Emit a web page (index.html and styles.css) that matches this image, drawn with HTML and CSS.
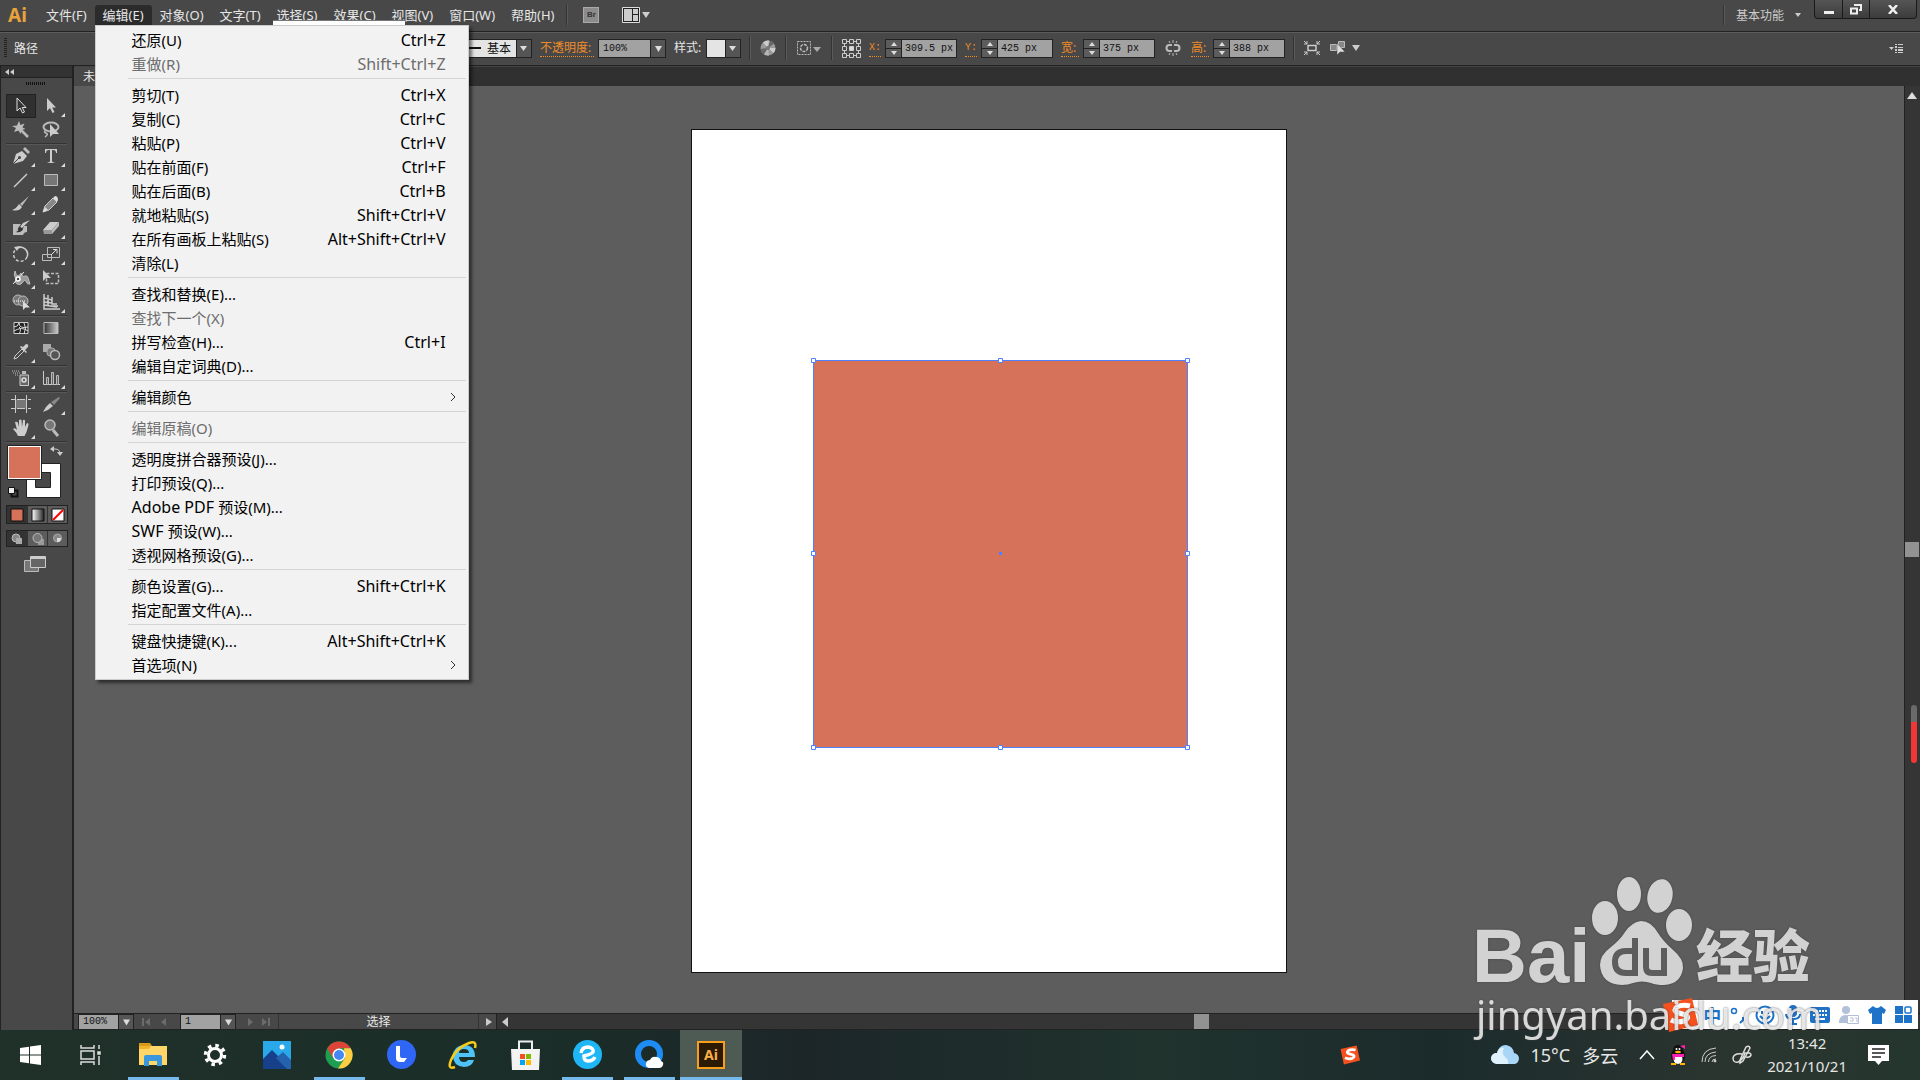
FILE: index.html
```html
<!DOCTYPE html>
<html lang="zh-CN">
<head>
<meta charset="utf-8">
<title>Illustrator</title>
<link rel="stylesheet" href="styles.css">
</head>
<body>
<header class="titlebar">
  <span class="brand">Ai</span>
  <nav class="menubar">
    <button>文件(F)</button>
    <div class="menu-host">
      <button class="open">编辑(E)</button>
      <div class="menu" role="menu">
        <section>
          <button>还原(U)<kbd>Ctrl+Z</kbd></button>
          <button disabled>重做(R)<kbd>Shift+Ctrl+Z</kbd></button>
        </section>
        <section>
          <button>剪切(T)<kbd>Ctrl+X</kbd></button>
          <button>复制(C)<kbd>Ctrl+C</kbd></button>
          <button>粘贴(P)<kbd>Ctrl+V</kbd></button>
          <button>贴在前面(F)<kbd>Ctrl+F</kbd></button>
          <button>贴在后面(B)<kbd>Ctrl+B</kbd></button>
          <button>就地粘贴(S)<kbd>Shift+Ctrl+V</kbd></button>
          <button>在所有画板上粘贴(S)<kbd>Alt+Shift+Ctrl+V</kbd></button>
          <button>清除(L)</button>
        </section>
        <section>
          <button>查找和替换(E)...</button>
          <button disabled>查找下一个(X)</button>
          <button>拼写检查(H)...<kbd>Ctrl+I</kbd></button>
          <button>编辑自定词典(D)...</button>
        </section>
        <section>
          <button class="sub">编辑颜色<svg width="6" height="10" viewBox="0 0 6 10"><path d="M1 1l4 4-4 4"/></svg></button>
        </section>
        <section>
          <button disabled>编辑原稿(O)</button>
        </section>
        <section>
          <button>透明度拼合器预设(J)...</button>
          <button>打印预设(Q)...</button>
          <button><span class="latin">Adobe PDF&nbsp;</span>预设(M)...</button>
          <button><span class="latin">SWF&nbsp;</span>预设(W)...</button>
          <button>透视网格预设(G)...</button>
        </section>
        <section>
          <button>颜色设置(G)...<kbd>Shift+Ctrl+K</kbd></button>
          <button>指定配置文件(A)...</button>
        </section>
        <section>
          <button>键盘快捷键(K)...<kbd>Alt+Shift+Ctrl+K</kbd></button>
          <button class="sub">首选项(N)<svg width="6" height="10" viewBox="0 0 6 10"><path d="M1 1l4 4-4 4"/></svg></button>
        </section>
      </div>
    </div>
    <button>对象(O)</button>
    <button>文字(T)</button>
    <div class="menu-host">
      <button>选择(S)</button>
      <span class="flyout"></span>
    </div>
    <button>效果(C)</button>
    <button>视图(V)</button>
    <button>窗口(W)</button>
    <button>帮助(H)</button>
  </nav>
  <span class="sep"></span>
  <button class="bridge" aria-label="Bridge">Br</button>
  <button class="bare" aria-label="排列文档"><svg width="28" height="16" viewBox="0 0 28 16"><path d="M.5.5h17v15H.5z" fill="#222" stroke="#ddd"/><path d="M2 2h8v12H2zM11 2h5v5h-5zM11 8h5v6h-5z" fill="#ccc"/><path d="M20 5h8l-4 6z" fill="#ccc"/></svg></button>
  <div class="title-right">
    <span class="sep"></span>
    <button class="workspace">基本功能<svg width="6" height="4" viewBox="0 0 6 4"><path d="M0 0h6L3 4z" fill="#ccc"/></svg></button>
    <div class="window-buttons">
      <button aria-label="最小化"><svg width="10" height="10" viewBox="0 0 10 10"><path d="M0 7h10v3H0z" fill="#eee"/></svg></button>
      <button aria-label="还原"><svg width="12" height="11" viewBox="0 0 12 11"><path d="M4 1h7v5H9M1 4.500h6v5H1z" fill="none" stroke="#eee" stroke-width="2"/></svg></button>
      <button class="close" aria-label="关闭"><svg width="10" height="9" viewBox="0 0 10 9"><path d="M1 0l8 9M9 0L1 9" stroke="#eee" stroke-width="2.500"/></svg></button>
    </div>
  </div>
</header>

<div class="control">
  <div class="context"><i class="grip"></i>路径</div>
  <select class="brush" aria-label="画笔"><option>基本</option></select>
  <div class="pair"><label class="hot w54" for="op">不透明度:</label><select id="op" class="combo w68"><option>100%</option></select></div>
  <div class="pair"><label class="w28" for="st">样式:</label><button id="st" class="swatch"></button></div>
  <span class="sep tall"></span>
  <button class="bare w18" aria-label="重新着色"><svg width="16" height="16" viewBox="0 0 16 16"><circle cx="8" cy="8" r="7.500" fill="#999"/><path d="M8 8L3 2.500A7.500 7.500 0 0 1 9 .6zM8 8h7.500a7.500 7.500 0 0 1-2 5z" fill="#ccc"/><path d="M8 8L.6 9A7.500 7.500 0 0 0 4 14.400zM8 8l2-7.200a7.500 7.500 0 0 1 4 2.600z" fill="#666"/><path d="M8 8l-4 6.400a7.500 7.500 0 0 0 5 1z" fill="#b5b5b5"/><circle cx="8" cy="8" r="2" fill="#777"/></svg></button>
  <span class="sep tall"></span>
  <button class="bare w28" aria-label="对齐"><svg width="24" height="14" viewBox="0 0 24 14"><path d="M.5.5h13v13H.5z" fill="none" stroke="#bbb" stroke-dasharray="2 1"/><circle cx="7" cy="7" r="3.500" fill="none" stroke="#bbb" stroke-width="1.500" stroke-dasharray="3 1"/><path d="M16 6h8l-4 5z" fill="#aaa"/></svg></button>
  <span class="sep tall"></span>
  <button class="bare w20" aria-label="参考点"><svg width="20" height="20" viewBox="0 0 20 20" fill="none" stroke="#ccc"><path d="M1.500 1.500h4v4h-4zM8.500 1.500h4v4h-4zM15.500 1.500h4v4h-4zM1.500 8.500h4v4h-4zM15.500 8.500h4v4h-4zM1.500 15.500h4v4h-4zM8.500 15.500h4v4h-4zM15.500 15.500h4v4h-4zM5.500 3.500h3M12.500 3.500h3M5.500 17.500h3M12.500 17.500h3M3.500 5.500v3M3.500 12.500v3M17.500 5.500v3M17.500 12.500v3"/><path d="M8.500 8.500h4v4h-4z" fill="#ddd"/></svg></button>
  <div class="pair"><label class="hot mono w12" for="fx">X:</label><span class="num"><span class="spin"><button aria-label="增加"></button><button aria-label="减少"></button></span><input id="fx" value="309.5 px"></span></div>
  <div class="pair"><label class="hot mono w12" for="fy">Y:</label><span class="num"><span class="spin"><button aria-label="增加"></button><button aria-label="减少"></button></span><input id="fy" value="425 px"></span></div>
  <div class="pair"><label class="hot w18" for="fw">宽:</label><span class="num"><span class="spin"><button aria-label="增加"></button><button aria-label="减少"></button></span><input id="fw" value="375 px"></span></div>
  <button class="bare w20" aria-label="约束宽高比例"><svg width="16" height="16" viewBox="0 0 16 16" fill="none" stroke="#bbb"><path d="M7 5H4.500a3 3 0 0 0 0 6H7M9 5h2.500a3 3 0 0 1 0 6H9" stroke-width="2"/><path d="M8 0v3M4 1l1 2M12 1l-1 2M8 16v-3M4 15l1-2M12 15l-1-2"/></svg></button>
  <div class="pair"><label class="hot w18" for="fh">高:</label><span class="num"><span class="spin"><button aria-label="增加"></button><button aria-label="减少"></button></span><input id="fh" value="388 px"></span></div>
  <span class="sep tall"></span>
  <button class="bare w18" aria-label="隔离"><svg width="16" height="14" viewBox="0 0 16 14" fill="none" stroke="#ccc"><path d="M4 4.500h8v5H4z" stroke-width="1.500"/><path d="M0 0l3 3M16 0l-3 3M0 14l3-3M16 14l-3-3M3 0v3H0M13 0v3h3M3 14v-3H0M13 14v-3h3"/></svg></button>
  <button class="bare" aria-label="选择类似对象"><svg width="32" height="16" viewBox="0 0 32 16"><path d="M1.500 4.500h6v6h-6zM9.500 1.500h6v6h-6z" fill="#888" stroke="#bbb"/><path d="M8 3v12l3-3 5 0z" fill="#ddd" stroke="#444" stroke-width=".5"/><path d="M23 5h8l-4 6z" fill="#ccc"/></svg></button>
  <button class="bare panel-menu" aria-label="面板菜单"><svg width="14" height="9" viewBox="0 0 14 9"><path d="M0 3h5L2.500 6zM6 0h2v1H6zM9 0h5v1H9zM6 2h2v2H6zM9 3h5v1H9zM6 5h2v2H6zM9 5h5v2H9zM6 8h2v1H6zM9 8h5v1H9z" fill="#ccc"/></svg></button>
</div>

<main class="workspace-area">
  <aside class="tools">
    <div class="tools-head"><svg width="10" height="6" viewBox="0 0 10 6"><path d="M4 0v6L0 3zM9 0v6L5 3z" fill="#ccc"/></svg></div>
    <i class="tools-grip"></i>
    <div class="group">
      <button class="active" aria-label="选择"><svg viewBox="0 0 20 20"><path d="M6 2v13l3-3 2.500 5 2-1-2.300-4.500H15z" fill="#333" stroke="#ddd"/></svg></button>
      <button class="more" aria-label="直接选择"><svg viewBox="0 0 20 20"><path d="M6 2v13l3-3 2.500 5 2-1-2.300-4.500H15z" fill="#ccc"/></svg></button>
      <button aria-label="魔棒"><svg viewBox="0 0 20 20"><path d="M9 9l8 8" stroke="#bbb" stroke-width="2.500"/><path d="M8 1l1.500 4 4-1.500-2 4 3 1.500-4 1-1 4-2-3.500L3 12l2-4L1 6l5-.5z" fill="#bbb"/></svg></button>
      <button aria-label="套索"><svg viewBox="0 0 20 20"><ellipse cx="10" cy="7" rx="7.500" ry="4.500" fill="none" stroke="#bbb" stroke-width="2"/><path d="M5 10q-3 2 0 3t-1 4" fill="none" stroke="#bbb" stroke-width="1.500"/><path d="M9 4v13l3-3h6z" fill="#ccc"/></svg></button>
    </div>
    <div class="group">
      <button class="more" aria-label="钢笔"><svg viewBox="0 0 20 20"><path d="M2 18l3-10 6-3 5 5-4 5z" fill="#ccc"/><path d="M2 18l6-6" stroke="#444"/><circle cx="8.500" cy="11.500" r="1.500" fill="#444"/><path d="M12 3l2-2 5 5-2 2z" fill="#bbb"/></svg></button>
      <button class="more" aria-label="文字"><svg viewBox="0 0 20 20"><path d="M4 3h12v4h-1q0-3-3-3h-1v11q0 1.500 2.500 1.500V17h-7v-.5Q9 16.500 9 15V4H8Q5 4 5 7H4z" fill="#ccc"/></svg></button>
      <button class="more" aria-label="直线段"><svg viewBox="0 0 20 20"><path d="M3 17L16 4" stroke="#ccc" stroke-width="1.500"/></svg></button>
      <button class="more" aria-label="矩形"><svg viewBox="0 0 20 20"><path d="M3.500 4.500h13v11h-13z" fill="#777" stroke="#bbb"/></svg></button>
      <button class="more" aria-label="画笔"><svg viewBox="0 0 20 20"><path d="M18 2l-7 10-2-2z" fill="#bbb"/><path d="M8 10l3 3q-3 5-10 3 4-1 7-6z" fill="#ccc"/></svg></button>
      <button class="more" aria-label="铅笔"><svg viewBox="0 0 20 20"><path d="M2 18l2-6 8-8 4 4-8 8z" fill="#888" stroke="#ccc"/><path d="M12 4l2-2q3 0 3 4l-1 2z" fill="#ddd"/><path d="M2 18l2-5 3 3z" fill="#ddd"/></svg></button>
      <button aria-label="斑点画笔"><svg viewBox="0 0 20 20"><path d="M2 6h8l-3 4q-1 3 2 3 3-1 4-5h3v6q-3 0-4 3H2z" fill="#bbb"/><path d="M19 2l-8 8-2-1 3-4z" fill="#ccc"/><path d="M9 9l3 2q-2 4-7 3 3-1 4-5z" fill="#333"/></svg></button>
      <button class="more" aria-label="橡皮擦"><svg viewBox="0 0 20 20"><path d="M2 12l7-8h9l-7 8z" fill="#ccc"/><path d="M2 12h9v4H3z" fill="#999"/><path d="M11 12l7-8v4l-7 8z" fill="#bbb"/></svg></button>
    </div>
    <div class="group">
      <button class="more" aria-label="旋转"><svg viewBox="0 0 20 20"><path d="M5 5a7 7 0 0 1 11 8" fill="none" stroke="#ccc" stroke-width="1.500"/><path d="M16 13a7 7 0 1 1-12-7" fill="none" stroke="#ccc" stroke-width="1.500" stroke-dasharray="3 2"/><path d="M3 3l6-1-3 5z" fill="#ccc"/></svg></button>
      <button class="more" aria-label="比例缩放"><svg viewBox="0 0 20 20"><path d="M6.500 3.500h12v10h-12zM1.500 10.500h9v6h-9z" fill="none" stroke="#bbb"/><path d="M10 11l5-5M12 5.500h4v4" fill="none" stroke="#ddd"/></svg></button>
      <button class="more" aria-label="宽度"><svg viewBox="0 0 20 20"><path d="M4 3q1 5 3 5 2-1 3-3 2 5 4 3 3-1 4 5l1 3q-3 1-4-3-2-2-3 1-2 4-6 2-3-2-1-5-3-4-1-8z" fill="#999" stroke="#bbb"/><path d="M2 16L13 4" stroke="#eee"/><circle cx="7" cy="11" r="2" fill="#444" stroke="#fff" stroke-width="1.500"/></svg></button>
      <button aria-label="自由变换"><svg viewBox="0 0 20 20"><path d="M5.500 5.500h12v10h-12z" fill="none" stroke="#bbb" stroke-width="1.500" stroke-dasharray="3 1.500"/><path d="M2 2v11l3-3h5z" fill="#ccc"/></svg></button>
      <button class="more" aria-label="形状生成器"><svg viewBox="0 0 20 20"><circle cx="7" cy="8" r="5" fill="#777" stroke="#bbb"/><circle cx="12" cy="9" r="5" fill="#777" stroke="#bbb"/><path d="M3 9h11" stroke="#fff" stroke-dasharray="1 1"/><path d="M12 9v9l2.500-2.500H19z" fill="#ddd"/></svg></button>
      <button class="more" aria-label="透视网格"><svg viewBox="0 0 20 20"><path d="M3 2v15h16M7 3v11h10M11 5v7h5M3 6l8 2M3 10l8 1M3 13l13 2" fill="none" stroke="#ccc" stroke-width="1.500"/></svg></button>
    </div>
    <div class="group">
      <button aria-label="网格"><svg viewBox="0 0 20 20"><path d="M3 4.500h14v11H3z" fill="#222" stroke="#ccc"/><path d="M3 9q4 0 5-4 0 6 9 4M3 13q8-5 14 0M8 16q3-5 0-7M13 16q3-6 0-11" fill="none" stroke="#ddd"/></svg></button>
      <button aria-label="渐变"><svg viewBox="0 0 20 20"><defs><linearGradient id="g"><stop stop-color="#333"/><stop offset="1" stop-color="#ccc"/></linearGradient></defs><path d="M3 4.500h14v11H3z" fill="url(#g)" stroke="#bbb"/></svg></button>
      <button class="more" aria-label="吸管"><svg viewBox="0 0 20 20"><path d="M3 17l1-3 7-7 2 2-7 7z" fill="none" stroke="#ccc"/><path d="M9 5l6 6 1-1-2-2 3-3q1-3-2-3l-3 3-2-1z" fill="#ccc"/></svg></button>
      <button aria-label="混合"><svg viewBox="0 0 20 20"><path d="M2 2h8v8H2z" fill="#aaa"/><rect x="6" y="6" width="8" height="8" rx="3" fill="#777" stroke="#aaa"/><circle cx="14" cy="13" r="4.500" fill="#555" stroke="#bbb" stroke-width="1.500"/></svg></button>
    </div>
    <div class="group">
      <button class="more" aria-label="符号喷枪"><svg viewBox="0 0 20 20"><path d="M9 7h8.500v10.500H9z" fill="#666" stroke="#ccc"/><circle cx="13" cy="12" r="2" fill="none" stroke="#ddd" stroke-width="1.500"/><path d="M11 3h4v3h-4z" fill="#bbb"/><path d="M1 3h8M2 5h8M4 7h4" stroke="#bbb" stroke-dasharray="1 1"/></svg></button>
      <button class="more" aria-label="柱形图"><svg viewBox="0 0 20 20"><path d="M2.500 3v13.500H19" fill="none" stroke="#ccc"/><path d="M5.500 9.500h2v7h-2zM10.500 4.500h2v12h-2zM15.500 7.500h2v9h-2z" fill="#666" stroke="#bbb"/></svg></button>
    </div>
    <div class="group">
      <button aria-label="画板"><svg viewBox="0 0 20 20"><path d="M4.500 5.500h11v9h-11z" fill="#777"/><path d="M4.500 1v18M15.500 1v18M0 5.500h4M6 5.500h8M17 5.500h3M0 14.500h4M6 14.500h8M17 14.500h3" stroke="#ccc"/></svg></button>
      <button class="more" aria-label="切片"><svg viewBox="0 0 20 20"><path d="M2 18q3-6 7-9l3 3q-4 4-10 6z" fill="#ccc"/><path d="M10 8l8-5 1 1-6 7z" fill="#888"/></svg></button>
      <button class="more" aria-label="抓手"><svg viewBox="0 0 20 20"><path d="M7 18q-1-3-5-7 2-2 4 1L4 4q2-1 3 1l1 4V2q2-1 2.500 0l.5 7 1-7q2-1 2 1v6l2-4q2 0 1.500 2l-2 7-2 4z" fill="#ccc"/></svg></button>
      <button aria-label="缩放"><svg viewBox="0 0 20 20"><path d="M12 12l5 6" stroke="#bbb" stroke-width="3"/><circle cx="9" cy="7" r="5" fill="#777" stroke="#bbb" stroke-width="1.500"/></svg></button>
    </div>
    <svg class="colors" width="64" height="56" viewBox="0 0 64 56"><path d="M20.500 19.500h34v34h-34z" fill="#fff" stroke="#222"/><path d="M29.500 28.500h15v15h-15z" fill="#484848" stroke="#222"/><path d="M1.500 1.500h34v34h-34z" fill="#fff" stroke="#222"/><path d="M3 3h31v31H3z" fill="#d7725a"/><path d="M44 5l4-3v6zM51 8h6l-3 4z" fill="#ccc"/><path d="M46 5h3q5 0 5 5" fill="none" stroke="#ccc"/><path d="M5.500 46.500h6v6h-6z" fill="none" stroke="#111" stroke-width="2"/><path d="M2.500 43.500h6v6h-6z" fill="#eee" stroke="#111"/></svg>
    <div class="modes">
      <button class="active" aria-label="颜色"><svg viewBox="0 0 14 14"><path d="M1 1h12v12H1z" fill="#d7725a" stroke="#111"/></svg></button>
      <button aria-label="渐变填充"><svg viewBox="0 0 14 14"><defs><linearGradient id="h"><stop stop-color="#fff"/><stop offset="1" stop-color="#222"/></linearGradient></defs><path d="M1 1h12v12H1z" fill="url(#h)" stroke="#111"/></svg></button>
      <button aria-label="无"><svg viewBox="0 0 14 14"><path d="M1 1h12v12H1z" fill="#fff" stroke="#111"/><path d="M2 12L12 2" stroke="red" stroke-width="2"/></svg></button>
    </div>
    <div class="modes second">
      <button class="active" aria-label="正常绘图"><svg viewBox="0 0 14 14"><circle cx="6" cy="6" r="4" fill="#888" stroke="#bbb"/><path d="M6 6h6v6H6z" fill="#aaa"/></svg></button>
      <button aria-label="背面绘图"><svg viewBox="0 0 14 14"><path d="M7 7h6v6H7z" fill="#999"/><circle cx="6.500" cy="6" r="4.500" fill="#777" stroke="#bbb"/></svg></button>
      <button aria-label="内部绘图"><svg viewBox="0 0 14 14"><circle cx="6.500" cy="6" r="4" fill="#888" stroke="#aaa"/><path d="M6 6h4q0 4-4 4z" fill="#ddd"/></svg></button>
    </div>
    <button class="bare screen-mode" aria-label="屏幕模式"><svg width="22" height="16" viewBox="0 0 22 16"><path d="M.5 4.500h14v11H.5z" fill="#777" stroke="#bbb"/><path d="M6.500.5h15v11h-15z" fill="#666" stroke="#ccc"/><path d="M7 1h14v2H7z" fill="#ccc"/></svg></button>
  </aside>

  <div class="document">
    <div class="tabs"><span class="tab">未标题-1</span></div>
    <div class="view">
      <div class="canvas">
        <div class="artboard">
          <svg class="shape" width="383" height="396" viewBox="0 0 383 396"><path d="M4.500 4.500h374v387h-374z" fill="#d7725a" stroke="#4f80ff"/><g fill="#fff" stroke="#4f80ff"><path d="M2.500 2.500h4v4h-4zM189.500 2.500h4v4h-4zM376.500 2.500h4v4h-4zM2.500 195.500h4v4h-4zM376.500 195.500h4v4h-4zM2.500 389.500h4v4h-4zM189.500 389.500h4v4h-4zM376.500 389.500h4v4h-4z"/></g><path d="M190 196h3v3h-3z" fill="#4f80ff"/></svg>
        </div>
      </div>
      <div class="vscroll"><svg width="10" height="7" viewBox="0 0 10 7"><path d="M5 0l5 7H0z" fill="#ddd"/></svg><i class="thumb"></i><i class="level"></i></div>
    </div>
    <div class="status">
      <select class="combo w56" aria-label="缩放"><option>100%</option></select>
      <svg class="nav" width="46" height="10" viewBox="0 0 46 10"><path d="M8 1h2v8H8zM16 1v8l-5-4zM32 1v8l-5-4z" fill="#6c6c6c"/></svg>
      <select class="combo w56" aria-label="画板"><option>1</option></select>
      <svg class="nav" width="42" height="10" viewBox="0 0 42 10"><path d="M12 1v8l5-4zM26 1v8l5-4zM32 1h2v8h-2z" fill="#6c6c6c"/></svg>
      <span class="state">选择</span>
      <span class="play"><svg width="6" height="8" viewBox="0 0 6 8"><path d="M0 0v8l6-4z" fill="#ccc"/></svg></span>
      <div class="hscroll"><svg width="6" height="10" viewBox="0 0 6 10"><path d="M6 0v10L0 5z" fill="#ccc"/></svg><i class="thumb"></i></div>
    </div>
  </div>
</main>

<footer class="taskbar">
  <button class="start" aria-label="开始"><svg width="21" height="20" viewBox="0 0 21 20"><path d="M0 3l9-1.300V9.500H0zM10 1.500L21 0v9.500H10zM0 10.500h9v7.800L0 17zM10 10.500h11V20l-11-1.500z" fill="#fff"/></svg></button>
  <button aria-label="任务视图"><svg width="22" height="20" viewBox="0 0 22 20" fill="none" stroke="#ddd" stroke-width="1.500"><path d="M1 0v3h13V0M1 6h13v8H1zM1 20v-3h13v3M19 0v4M19 11v9"/><path d="M18 7h2v2h-2z" fill="#fff"/></svg></button>
  <button class="run" aria-label="文件资源管理器"><svg width="28" height="24" viewBox="0 0 28 24"><path d="M0 0h11l2 3H0z" fill="#d99a1c"/><path d="M0 3h28v19H0z" fill="#ffd667"/><path d="M0 3h12l-2 3H0z" fill="#f0b429"/><path d="M5 23v-9q0-2 2-2h14q2 0 2 2v9h-5v-5h-8v5z" fill="#3a96dd"/></svg></button>
  <button aria-label="设置"><svg width="24" height="24" viewBox="0 0 24 24" fill="none" stroke="#fff"><circle cx="12" cy="12" r="6.500" stroke-width="3"/><circle cx="12" cy="12" r="9.500" stroke-width="3.500" stroke-dasharray="3.500 3.960"/></svg></button>
  <button aria-label="照片"><svg width="28" height="28" viewBox="0 0 28 28"><path d="M0 0h28v28H0z" fill="#29a8ea"/><path d="M0 18L9 9l19 19H0z" fill="#17408b"/><path d="M13 17l7-6 8 8v9h-4z" fill="#2462ae"/><circle cx="19" cy="6" r="2.500" fill="#fff"/></svg></button>
  <button class="run" aria-label="Chrome"><svg width="28" height="28" viewBox="0 0 28 28"><circle cx="14" cy="14" r="13.500" fill="#1e9e50"/><path d="M2.300 7.300A13.500 13.500 0 0 1 25.700 7.300H14l-6 10z" fill="#dc4437"/><path d="M25.700 7.300A13.500 13.500 0 0 1 13 27.500L20 17l-1-9.700z" fill="#ffcd41"/><circle cx="14" cy="14" r="6.500" fill="#fff"/><circle cx="14" cy="14" r="5" fill="#4688f1"/></svg></button>
  <button aria-label="联想"><svg width="29" height="29" viewBox="0 0 29 29"><circle cx="14.500" cy="14.500" r="14.500" fill="#2f66f6"/><path d="M9 6h4v10q0 2 2 2h5l-3 4h-4q-4 0-4-4z" fill="#fff"/></svg></button>
  <button aria-label="Internet Explorer"><svg width="30" height="30" viewBox="0 0 30 30"><path fill-rule="evenodd" d="M27 17H11q0 5 5 5 3 0 4-2h6q-2 7-10 7Q5 26 5 16T16 5q11 0 11 12zM11 13h10q0-4-5-4t-5 4z" fill="#4fc3f7"/><path d="M27 8q2-8-6-5Q8 8 3 20q-4 10 4 7" fill="none" stroke="#f6cb1c" stroke-width="2.500"/></svg></button>
  <button aria-label="应用商店"><svg width="29" height="30" viewBox="0 0 29 30"><path d="M8 12V1.500h13V12" fill="none" stroke="#eee" stroke-width="2"/><path d="M0 9h29l-1 21H1z" fill="#f3f3f3"/><path d="M9 14h5v5H9z" fill="#f25022"/><path d="M15 14h5v5h-5z" fill="#7fba00"/><path d="M9 20h5v5H9z" fill="#00a4ef"/><path d="M15 20h5v5h-5z" fill="#ffb900"/></svg></button>
  <button class="run" aria-label="浏览器"><svg width="29" height="29" viewBox="0 0 29 29"><circle cx="14.500" cy="14.500" r="14.500" fill="#1fb6f5"/><path d="M8 13q1-6 7-6 6 1 5 5-1 2-9 4 0 5 4 5 5 0 7-4" fill="none" stroke="#fff" stroke-width="3.500"/></svg></button>
  <button class="run" aria-label="QQ浏览器"><svg width="29" height="29" viewBox="0 0 29 29"><circle cx="14" cy="14" r="11" fill="none" stroke="#1d8df5" stroke-width="6"/><path d="M14 28q-4-1-3-5 1-3 4-3 2-4 6-3 4 0 5 4 3 1 2 4-1 3-4 3z" fill="#fff"/></svg></button>
  <button class="run current" aria-label="Illustrator"><span class="ai-tile">Ai</span></button>
  <div class="tray">
    <svg class="sogou" width="20" height="20" viewBox="0 0 36 34"><path d="M1 6L30 0l6 27-29 7z" fill="#f4511e"/><path d="M28 8q-8-2-13 1-5 4 2 6l7 2q4 3-2 6-7 2-13-1" fill="none" stroke="#fff" stroke-width="5"/></svg>
    <button class="weather"><svg width="28" height="20" viewBox="0 0 28 20"><path d="M6 19q-6-1-6-6 1-5 6-5 2-8 9-8 7 1 8 8 5 1 5 6-1 5-5 5z" fill="#a9d6f7"/><path d="M6 19q-6-1-6-6 1-5 6-5 2-6 7-5-3 6 1 9t3 7z" fill="#dff1fd"/></svg><span>15°C</span><span>多云</span></button>
    <svg width="16" height="10" viewBox="0 0 16 10"><path d="M1 9l7-8 7 8" fill="none" stroke="#fff" stroke-width="1.500"/></svg>
    <svg width="16" height="20" viewBox="0 0 16 20"><ellipse cx="8" cy="11" rx="7" ry="8" fill="#111"/><circle cx="8" cy="5" r="5" fill="#111"/><ellipse cx="8" cy="14" rx="4.500" ry="5" fill="#fff"/><path d="M2 9h12v3H5v3H3z" fill="#ff1fb4"/><path d="M10 1l5-1v4z" fill="#ff1fb4"/><ellipse cx="8" cy="7" rx="3" ry="1.200" fill="#ffb400"/><circle cx="6.500" cy="4" r="1" fill="#fff"/><circle cx="9.500" cy="4" r="1" fill="#fff"/><path d="M1 18h5v2H1zM10 18h5v2h-5z" fill="#ffb400"/></svg>
    <svg width="16" height="16" viewBox="0 0 16 16" fill="none" stroke="#ccc"><path d="M1 15Q1 2 15 1M4 15q0-9 11-10M7.500 15q0-6 7.500-6.500M11 15q0-3 4-3"/><circle cx="14" cy="14" r="1" fill="#fff"/></svg>
    <svg width="20" height="20" viewBox="0 0 20 20" fill="none" stroke="#ddd" stroke-width="1.500"><path d="M8 15l6-13q3-2 4 1l-7 13-3 2zM10 9q-8-1-9 4 0 5 5 4 5-2 7-9 6-1 6 2-1 3-5 2"/></svg>
    <time><span>13:42</span><span>2021/10/21</span></time>
    <svg width="21" height="20" viewBox="0 0 21 20"><path d="M0 0h21v16h-7l-3.500 4L7 16H0z" fill="#fff"/><path d="M4 4h13M4 8h13M4 12h9" stroke="#222" stroke-width="1.500"/></svg>
  </div>
</footer>

<div class="ime">
  <svg width="36" height="34" viewBox="0 0 36 34"><path d="M1 6L30 0l6 27-29 7z" fill="#f4511e"/><path d="M28 8q-8-2-13 1-5 4 2 6l7 2q4 3-2 6-7 2-13-1" fill="none" stroke="#fff" stroke-width="5"/></svg>
  <span>中</span>
  <svg width="16" height="18" viewBox="0 0 16 18"><circle cx="4" cy="5" r="2.500" fill="none" stroke="#1e73c8" stroke-width="1.500"/><path d="M13 11v3l-3 3" fill="none" stroke="#1e73c8" stroke-width="2"/></svg>
  <svg width="20" height="20" viewBox="0 0 20 20" fill="none" stroke="#1e73c8" stroke-width="2"><circle cx="10" cy="10" r="8.500"/><path d="M7 6v3M13 6v3M5 11q5 6 10 0"/></svg>
  <svg width="16" height="20" viewBox="0 0 16 20" fill="none" stroke="#1e73c8" stroke-width="2"><rect x="5" y="1" width="6" height="10" rx="3" fill="#1e73c8"/><path d="M1 9q0 5 7 5t7-5M8 14v5M4 19h8"/></svg>
  <svg width="20" height="16" viewBox="0 0 20 16"><rect width="20" height="16" rx="2" fill="#1e73c8"/><path d="M3 4h14M3 8h14" stroke="#fff" stroke-width="2" stroke-dasharray="2 1"/><path d="M5 12h10" stroke="#fff" stroke-width="2"/></svg>
  <svg width="20" height="18" viewBox="0 0 20 18"><circle cx="7" cy="4" r="4" fill="#b3c0da"/><path d="M0 17q0-8 7-8 4 0 4 8z" fill="#b3c0da"/><path d="M8.500 9.500h11v8h-11z" fill="#fff" stroke="#b3c0da"/><path d="M11 12h3v3h-3M16 12h2v4" fill="none" stroke="#b3c0da"/></svg>
  <svg width="18" height="18" viewBox="0 0 18 18"><path d="M0 4l5-4q4 4 8 0l5 4-2 4-2-1v11H4V7L2 8z" fill="#1e73c8"/></svg>
  <svg width="17" height="17" viewBox="0 0 17 17"><path d="M0 0h8v8H0zM0 9h8v8H0zM9 9h8v8H9z" fill="#1e73c8"/><rect x="10" y="1" width="6" height="6" rx="1" fill="none" stroke="#1e73c8" stroke-width="1.500"/></svg>
</div>

<svg class="watermark" width="360" height="180" viewBox="0 0 360 180">
  <g fill="#d2d2d2">
    <text class="wm-logo" x="-4" y="107">Bai</text>
    <ellipse cx="129" cy="43" rx="13" ry="17"/><ellipse cx="153" cy="19" rx="12" ry="17"/><ellipse cx="184" cy="21" rx="12.500" ry="17" transform="rotate(12 184 21)"/><ellipse cx="203" cy="50" rx="13" ry="16"/>
    <path d="M165 46q10 0 17 12 5 8 14 16 12 10 11 19-2 16-19 17-8 0-13-2-9-3-18 0-5 2-11 2-21-1-22-20 0-10 11-18 9-7 14-15 7-10 16-11z"/>
    <text class="wm-cjk" x="220" y="102">经验</text>
  </g>
  <path d="M159 63v35h-9q-11 0-11-11 0-11 11-11h6M170 73v19q0 6 6 6h12V73" fill="none" stroke="#5d5d5d" stroke-width="6"/>
  <text class="wm-url" x="0" y="155">jingyan.baidu.com</text>
</svg>
</body>
</html>
```
FILE: styles.css
```css
* { box-sizing: border-box; }
body {
  margin: 0;
  height: 100vh;
  display: flex;
  flex-direction: column;
  overflow: hidden;
  background: #484848;
  color: #e6e6e6;
  font: 12px "Noto Sans", "Noto Sans CJK SC", sans-serif;
}
button, input, select { font: inherit; color: inherit; margin: 0; padding: 0; border: 0; border-radius: 0; background: none; }
svg { display: block; flex: none; }
.bare { display: flex; align-items: center; justify-content: center; }
.sep { width: 2px; height: 20px; background: #333; border-right: 1px solid #5a5a5a; flex: none; }
.sep.tall { height: 24px; }

/* title bar and menus */
.titlebar { flex: none; height: 32px; display: flex; align-items: center; border-bottom: 1px solid #222; padding-bottom: 1px; }
.brand { width: 38px; padding-left: 8px; color: #e8a33c; font: bold 19px/26px "Noto Sans", sans-serif; }
.menubar { display: flex; }
.menubar > button, .menu-host > button { height: 20px; padding: 0 8px; font-size: 13px; line-height: 20px; }
.menu-host { position: relative; }
.menu-host > .open { background: #2b2b2b; border-radius: 3px 3px 0 0; }
.titlebar > .sep { margin: 0 15px 0 4px; }
.bridge { width: 16px; height: 16px; margin-right: 23px; background: #8c8c8c; border: 1px solid #aaa; color: #333; font: bold 8px/14px "Liberation Sans", sans-serif; }
.title-right { margin-left: auto; display: flex; align-items: center; align-self: flex-start; padding-right: 3px; height: 30px; }
.workspace { display: flex; align-items: center; gap: 11px; padding: 0 13px 0 11px; color: #ccc; }
.window-buttons { align-self: flex-start; display: flex; border: 1px solid #1a1a1a; border-top: 0; border-radius: 0 0 4px 4px; background: linear-gradient(#555, #3c3c3c); height: 19px; }
.window-buttons button { width: 27px; display: grid; place-items: center; }
.window-buttons button + button { border-left: 1px solid #1a1a1a; }
.window-buttons .close { width: 47px; }
.flyout { position: absolute; left: 4px; top: 15px; width: 132px; height: 8px; background: #fff; border-top: 1px solid #777; z-index: 5; }

.menu {
  position: absolute; z-index: 10; left: 0; top: 20px; width: 374px;
  background: #f2f2f2; border: 1px solid #ccc; padding: 2px 0;
  box-shadow: 3px 3px 3px rgba(0, 0, 0, .5);
}
.menu section + section { border-top: 1px solid #d4d4d4; margin-top: 2px; padding-top: 4px; }
.menu section { margin: 0 2px 0 32px; }
.menu button { display: flex; align-items: center; width: 100%; height: 24px; padding: 0 20px 0 4px; color: #000; font-size: 15px; line-height: 24px; text-align: left; white-space: nowrap; }
.menu button:disabled { color: #6d6d6d; }
.menu kbd { margin-left: auto; font: 16px/24px "Noto Sans", sans-serif; }
.menu .latin { font-size: 16px; }
.menu .sub { padding-right: 10px; }
.menu .sub svg { margin-left: auto; fill: none; stroke: #333; }

/* control bar */
.control { flex: none; height: 34px; display: flex; align-items: center; gap: 8px; border-top: 1px solid #5c5c5c; border-bottom: 1px solid #222; padding-right: 17px; padding-bottom: 2px; }
.context { flex: none; width: 392px; display: flex; align-items: center; gap: 7px; padding-left: 4px; }
.grip { width: 3px; height: 20px; background: repeating-linear-gradient(#222 0 1px, transparent 1px 2px); }
.pair { display: flex; align-items: center; gap: 4px; }
.pair label { white-space: nowrap; line-height: 16px; }
.hot { color: #f08c28; border-bottom: 1px dotted #f08c28; }
.mono, .combo, .num input { font-family: "Liberation Mono", monospace; font-size: 10px; }
.w12 { width: 12px; } .w18 { width: 18px; } .w20 { width: 20px; } .w28 { width: 28px; }
.w54 { width: 54px; } .w56 { width: 56px; } .w68 { width: 68px; }
.brush, .combo {
  appearance: none; height: 19px; border: 1px solid #222; padding: 0 18px 0 4px; color: #111;
  background: url("data:image/svg+xml,%3Csvg xmlns='http://www.w3.org/2000/svg' width='15' height='17'%3E%3Cpath d='M0 0h15v17H0z' fill='%23555'/%3E%3Cpath d='M0 0h1v17H0z' fill='%23222'/%3E%3Cpath d='M5 6h7l-3.500 6z' fill='%23ddd'/%3E%3C/svg%3E") right center no-repeat #a2a2a2;
}
.brush { width: 132px; padding-left: 86px; background-color: #e4e4e4; background-image: url("data:image/svg+xml,%3Csvg xmlns='http://www.w3.org/2000/svg' width='15' height='17'%3E%3Cpath d='M0 0h15v17H0z' fill='%23555'/%3E%3Cpath d='M0 0h1v17H0z' fill='%23222'/%3E%3Cpath d='M4 6h7l-3.500 5z' fill='%23ddd'/%3E%3C/svg%3E"), linear-gradient(#111, #111); background-repeat: no-repeat; background-position: right center, left center; background-size: 15px 17px, 80px 2px; }
.swatch { width: 35px; height: 19px; border: 1px solid #222; background: url("data:image/svg+xml,%3Csvg xmlns='http://www.w3.org/2000/svg' width='15' height='17'%3E%3Cpath d='M0 0h15v17H0z' fill='%23555'/%3E%3Cpath d='M0 0h1v17H0z' fill='%23222'/%3E%3Cpath d='M4 6h7l-3.500 5z' fill='%23ddd'/%3E%3C/svg%3E") right center no-repeat #e4e4e4; }
.num { display: flex; height: 19px; border: 1px solid #222; }
.num input { width: 55px; padding: 0 3px; background: #a2a2a2; color: #111; border-left: 1px solid #222; }
.spin { display: grid; grid-template-rows: 1fr 1fr; width: 15px; background: #5c5c5c; }
.spin button { display: grid; place-items: center; }
.spin button::before { content: ""; border: 3px solid transparent; border-top: 0; border-bottom: 4px solid #ddd; }
.spin button + button { border-top: 1px solid #222; }
.spin button + button::before { border-bottom: 0; border-top: 4px solid #ddd; }
.panel-menu { margin-left: auto; }

/* tools */
.workspace-area { flex: 1; min-height: 0; display: flex; }
.tools { flex: none; width: 74px; border-left: 1px solid #222; border-right: 2px solid #222; display: flex; flex-direction: column; }
.tools-head { height: 12px; background: #333; padding: 3px 4px; border-bottom: 1px solid #222; }
.tools-grip { width: 20px; height: 3px; margin: 4px 0 9px 25px; background: repeating-linear-gradient(90deg, #111 0 1px, transparent 1px 2px); }
.group { display: grid; grid-template-columns: 30px 30px; margin: 0 5px; border-bottom: 1px solid #333; box-shadow: 0 1px #585858; padding-bottom: 1px; }
.group button { height: 24px; display: grid; place-items: center; position: relative; }
.group svg { width: 20px; height: 20px; }
.colors { margin: 2px 0 0 5px; }
.group button.active { background: #303030; border: 1px solid #222; }
.more::after { content: ""; position: absolute; right: 1px; bottom: 1px; border: 2px solid #ddd; border-top-color: transparent; border-left-color: transparent; }
.modes { display: grid; grid-template-columns: repeat(3, 20px); height: 19px; width: 62px; margin: 5px 5px 1px; border: 1px solid #222; background: #5c5c5c; }
.modes.second { height: 17px; margin-bottom: 9px; }
.modes button { display: grid; place-items: center; }
.modes button + button { border-left: 1px solid #333; }
.modes .active { background: #333; }
.modes svg { width: 14px; height: 14px; }
.screen-mode { align-self: flex-start; margin-left: 23px; }

/* document */
.document { flex: 1; min-width: 0; display: flex; flex-direction: column; }
.tabs { flex: none; height: 20px; background: #303030; border-top: 1px solid #444; }
.tab { display: block; width: 120px; height: 19px; padding-left: 9px; background: #484848; line-height: 19px; }
.view { flex: 1; min-height: 0; display: flex; }
.canvas { flex: 1; display: grid; place-items: center; background: #5d5d5d; padding-top: 2px; }
.artboard { position: relative; width: 596px; height: 844px; background: #fff; border: 1px solid #111; }
.shape { position: absolute; left: 117px; top: 226px; }
.vscroll { width: 16px; background: #353535; border-left: 1px solid #222; position: relative; padding: 6px 2px; }
.thumb { position: absolute; background: #929292; }
.vscroll .thumb { left: 0; right: 1px; top: 49.2%; height: 15px; }
.level { position: absolute; right: 3px; top: 66.8%; width: 6px; height: 58px; border-radius: 3px; background: linear-gradient(#6a6a6a 17px, #f23535 17px); }
.status { flex: none; height: 17px; display: flex; align-items: center; background: #484848; border-top: 1px solid #222; border-bottom: 1px solid #222; padding-left: 4px; }
.status .combo { height: 16px; }
.state { width: 200px; text-align: center; border-left: 1px solid #333; line-height: 15px; }
.play { width: 18px; padding-left: 7px; border-left: 1px solid #333; height: 15px; display: flex; align-items: center; }
.hscroll { flex: 1; height: 15px; background: #353535; position: relative; padding: 3px 5px; border-left: 1px solid #222; }
.hscroll .thumb { left: 49%; top: 0; bottom: 0; width: 15px; }

/* taskbar */
.taskbar { flex: none; height: 50px; display: flex; background: linear-gradient(90deg, #1f3129 0, #1b2d28 30%, #1c2629 42%, #20332d 60%, #1b2b2c 75%, #2b3530 90%, #24362d 100%); }
.taskbar > button { width: 62px; padding-top: 2px; display: grid; place-items: center; border-bottom: 3px solid transparent; }
.taskbar > .start { width: 60px; }
.taskbar > .run { background: linear-gradient(#76b9ed, #76b9ed) center bottom / 51px 3px no-repeat; background-origin: border-box; background-clip: border-box; }
.taskbar > .current { background: linear-gradient(#76b9ed, #76b9ed) center bottom / 62px 3px no-repeat #4d5b54; background-origin: border-box; }
.ai-tile { width: 28px; height: 28px; border: 2px solid #f79e1c; background: #2b1a05; color: #f9b04a; font: bold 14px/24px "Noto Sans", sans-serif; text-align: center; }
.tray { margin-left: auto; display: flex; align-items: center; gap: 15px; padding-right: 31px; }
.sogou { margin-right: 116px; }
.weather { display: flex; align-items: center; gap: 12px; font-size: 18px; margin-right: 6px; }
time { display: flex; flex-direction: column; align-items: center; font-size: 15px; line-height: 23px; }
time + svg { margin-left: 6px; }

/* input method bar and page mark */
.ime { position: absolute; right: 2px; bottom: 51px; height: 29px; width: 246px; background: #fff; display: flex; align-items: center; justify-content: space-between; padding-right: 6px; color: #1e73c8; font-size: 18px; font-weight: bold; }
.ime svg:first-child { margin-left: -10px; margin-right: -4px; }
.watermark { position: absolute; right: 84px; bottom: 25px; pointer-events: none; overflow: visible; filter: drop-shadow(0 0 1px #444); }
.wm-logo { font: bold 76px "Liberation Sans", sans-serif; }
.wm-cjk { font: 900 57px "Noto Sans CJK SC", sans-serif; }
.wm-url { font: 40px "Noto Sans", sans-serif; fill: rgba(255, 255, 255, .8); }
```
